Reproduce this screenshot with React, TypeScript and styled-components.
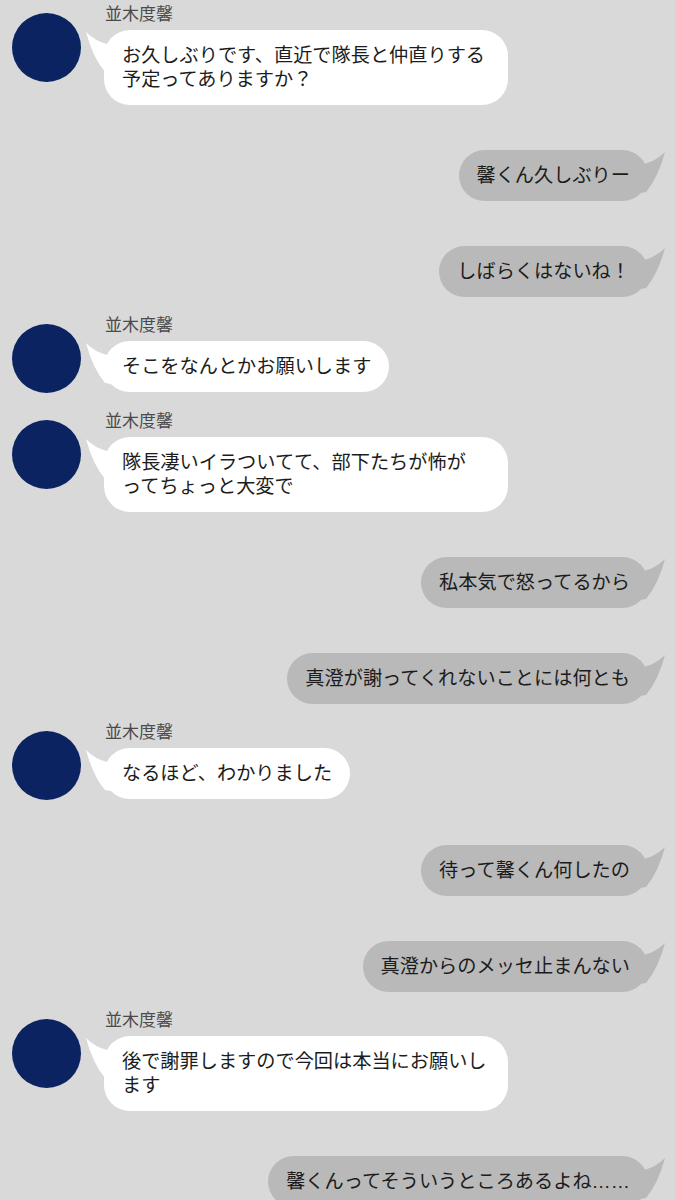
import React from "react";
import styled, { createGlobalStyle } from "styled-components";

const Global = createGlobalStyle`
  html, body {
    margin: 0;
    padding: 0;
    background: #d9d9d9;
  }
  body {
    font-family: "Liberation Sans", "Noto Sans CJK JP", sans-serif;
    color: #1c1c1c;
  }
`;

const Chat = styled.div`
  display: flex;
  flex-direction: column;
  width: 675px;
  min-height: 1200px;
  background: #d9d9d9;
  overflow: hidden;
`;

const LeftGroup = styled.div`
  display: flex;
  align-items: flex-start;
  padding-left: 12px;
  margin-top: 14px;
  &:first-child {
    margin-top: 0;
  }
`;

const Avatar = styled.div`
  flex-shrink: 0;
  width: 69px;
  height: 69px;
  margin-top: 13px;
  border-radius: 50%;
  background: #0b2461;
`;

const LeftBody = styled.div`
  display: flex;
  flex-direction: column;
  align-items: flex-start;
  margin-left: 23px;
`;

const Name = styled.div`
  font-family: "Noto Sans CJK JP", sans-serif;
  font-size: 17px;
  line-height: 26px;
  color: #4b4b4b;
  margin-bottom: 4px;
  padding-left: 1px;
`;

const RightRow = styled.div`
  display: flex;
  justify-content: flex-end;
  padding-right: 27px;
  margin-top: 45px;
`;

const Bubble = styled.div<{ $mine: boolean; $full: boolean }>`
  position: relative;
  box-sizing: border-box;
  width: ${(p) => (p.$full ? "404px" : "auto")};
  padding: 13.5px 18px;
  border-radius: 26px;
  background: ${(p) => (p.$mine ? "#b9b9b9" : "#ffffff")};
  font-size: 19.2px;
  line-height: 24px;
  white-space: pre-line;
  color: #1c1c1c;
`;

const BubbleText = styled.span`
  position: relative;
`;

const TailSvg = styled.svg<{ $mine: boolean }>`
  position: absolute;
  top: 0;
  width: 30px;
  height: 46px;
  ${(p) =>
    p.$mine
      ? "right: -17px; transform: scaleX(-1);"
      : "left: -18px;"}
`;

const Tail: React.FC<{ mine: boolean }> = ({ mine }) => (
  <TailSvg $mine={mine} viewBox="0 0 30 46" aria-hidden>
    <path
      d="M0 2 Q9 11 21 14 L30 14 L30 44 L19 42 Q7 28 0 2 Z"
      fill={mine ? "#b9b9b9" : "#ffffff"}
    />
  </TailSvg>
);

type Msg = { from: "them" | "me"; text: string };

const NAME = "並木度馨";

const messages: Msg[] = [
  { from: "them", text: "お久しぶりです、直近で隊長と仲直りする\n予定ってありますか？" },
  { from: "me", text: "馨くん久しぶりー" },
  { from: "me", text: "しばらくはないね！" },
  { from: "them", text: "そこをなんとかお願いします" },
  { from: "them", text: "隊長凄いイラついてて、部下たちが怖が\nってちょっと大変で" },
  { from: "me", text: "私本気で怒ってるから" },
  { from: "me", text: "真澄が謝ってくれないことには何とも" },
  { from: "them", text: "なるほど、わかりました" },
  { from: "me", text: "待って馨くん何したの" },
  { from: "me", text: "真澄からのメッセ止まんない" },
  { from: "them", text: "後で謝罪しますので今回は本当にお願いし\nます" },
  { from: "me", text: "馨くんってそういうところあるよね……" },
];

const MessageBubble: React.FC<{ msg: Msg }> = ({ msg }) => {
  const mine = msg.from === "me";
  return (
    <Bubble $mine={mine} $full={msg.text.includes("\n")}>
      <Tail mine={mine} />
      <BubbleText>{msg.text}</BubbleText>
    </Bubble>
  );
};

export default function App() {
  return (
    <>
      <Global />
      <Chat>
        {messages.map((m, i) =>
          m.from === "them" ? (
            <LeftGroup key={i}>
              <Avatar />
              <LeftBody>
                <Name>{NAME}</Name>
                <MessageBubble msg={m} />
              </LeftBody>
            </LeftGroup>
          ) : (
            <RightRow key={i}>
              <MessageBubble msg={m} />
            </RightRow>
          )
        )}
      </Chat>
    </>
  );
}
